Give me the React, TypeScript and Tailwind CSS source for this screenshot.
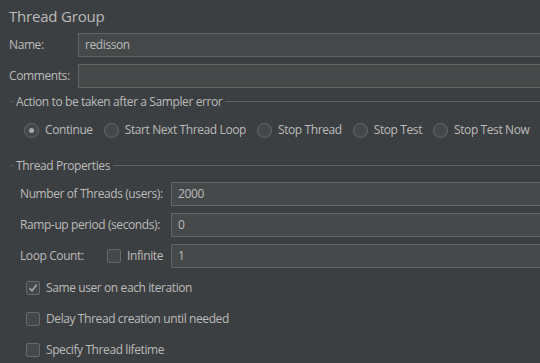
import React from "react";

const font = { fontFamily: '"Open Sans", "Noto Sans", sans-serif' };

function Field({ value = "" }: { value?: string }) {
  return (
    <div className="flex-1 min-w-0 h-[24px] border border-r-0 border-[#646464] bg-[#45494a] flex items-center pl-[6px] text-[12px] text-[#bbbbbb]">
      {value}
    </div>
  );
}

function Radio({ label, checked = false }: { label: string; checked?: boolean }) {
  return (
    <div className="flex items-center shrink-0 whitespace-nowrap">
      <div className="w-[15px] h-[15px] shrink-0 rounded-full border border-[#666869] bg-[#43494a] flex items-center justify-center">
        {checked && <div className="w-[5px] h-[5px] rounded-full bg-[#a9a9a9]" />}
      </div>
      <span className="ml-[6px] text-[12px] leading-none">{label}</span>
    </div>
  );
}

function Check({ label, checked = false }: { label: string; checked?: boolean }) {
  return (
    <div className="flex items-center h-[20px] whitespace-nowrap">
      <div className="w-[14px] h-[14px] shrink-0 rounded-[2px] border border-[#666869] bg-[#43494a] flex items-center justify-center">
        {checked && (
          <svg width="10" height="10" viewBox="0 0 10 10">
            <path d="M1.5 5.2 L4 7.8 L8.6 1.8" stroke="#a9a9a9" strokeWidth="1.6" fill="none" />
          </svg>
        )}
      </div>
      <span className="ml-[6px] text-[12px] leading-none">{label}</span>
    </div>
  );
}

function Header({ title }: { title: string }) {
  return (
    <div className="h-[17px] flex items-center whitespace-nowrap">
      <div className="ml-[11px] w-[3px] h-px bg-[#5e6163]" />
      <span className="ml-[2px] text-[12px] leading-none">{title}</span>
      <div className="ml-[3px] flex-1 h-px bg-[#5e6163]" />
    </div>
  );
}

export default function App() {
  return (
    <div
      className="w-[540px] h-[363px] bg-[#3c3f41] text-[#bbbbbb] overflow-hidden flex flex-col tracking-[-0.4px]"
      style={font}
    >
      <div className="h-[33px] flex items-center pl-[9px] text-[15px] tracking-[-0.2px]">Thread Group</div>
      <div className="flex items-center h-[24px]">
        <span className="w-[78px] shrink-0 pl-[9px] text-[12px]">Name:</span>
        <Field value="redisson" />
      </div>
      <div className="flex items-center h-[24px] mt-[7px]">
        <span className="w-[78px] shrink-0 pl-[9px] text-[12px]">Comments:</span>
        <Field />
      </div>
      <div className="mt-[5px]">
        <Header title="Action to be taken after a Sampler error" />
      </div>
      <div className="mt-[10px] h-[20px] flex items-center pl-[24px] gap-[11px]">
        <Radio label="Continue" checked />
        <Radio label="Start Next Thread Loop" />
        <Radio label="Stop Thread" />
        <Radio label="Stop Test" />
        <Radio label="Stop Test Now" />
      </div>
      <div className="mt-[17px]">
        <Header title="Thread Properties" />
      </div>
      <div className="mt-[8px] flex flex-col gap-[7px]">
        <div className="flex items-center h-[24px]">
          <span className="w-[171px] shrink-0 whitespace-nowrap pl-[20px] text-[12px]">Number of Threads (users):</span>
          <Field value="2000" />
        </div>
        <div className="flex items-center h-[24px]">
          <span className="w-[171px] shrink-0 whitespace-nowrap pl-[20px] text-[12px]">Ramp-up period (seconds):</span>
          <Field value="0" />
        </div>
        <div className="flex items-center h-[24px]">
          <div className="w-[171px] shrink-0 whitespace-nowrap pl-[20px] flex items-center text-[12px]">
            <span className="w-[87px]">Loop Count:</span>
            <div className="w-[14px] h-[14px] shrink-0 rounded-[2px] border border-[#666869] bg-[#43494a]" />
            <span className="ml-[6px]">Infinite</span>
          </div>
          <Field value="1" />
        </div>
      </div>
      <div className="mt-[10px] pl-[26px] flex flex-col gap-[11px]">
        <Check label="Same user on each iteration" checked />
        <Check label="Delay Thread creation until needed" />
        <Check label="Specify Thread lifetime" />
      </div>
    </div>
  );
}
